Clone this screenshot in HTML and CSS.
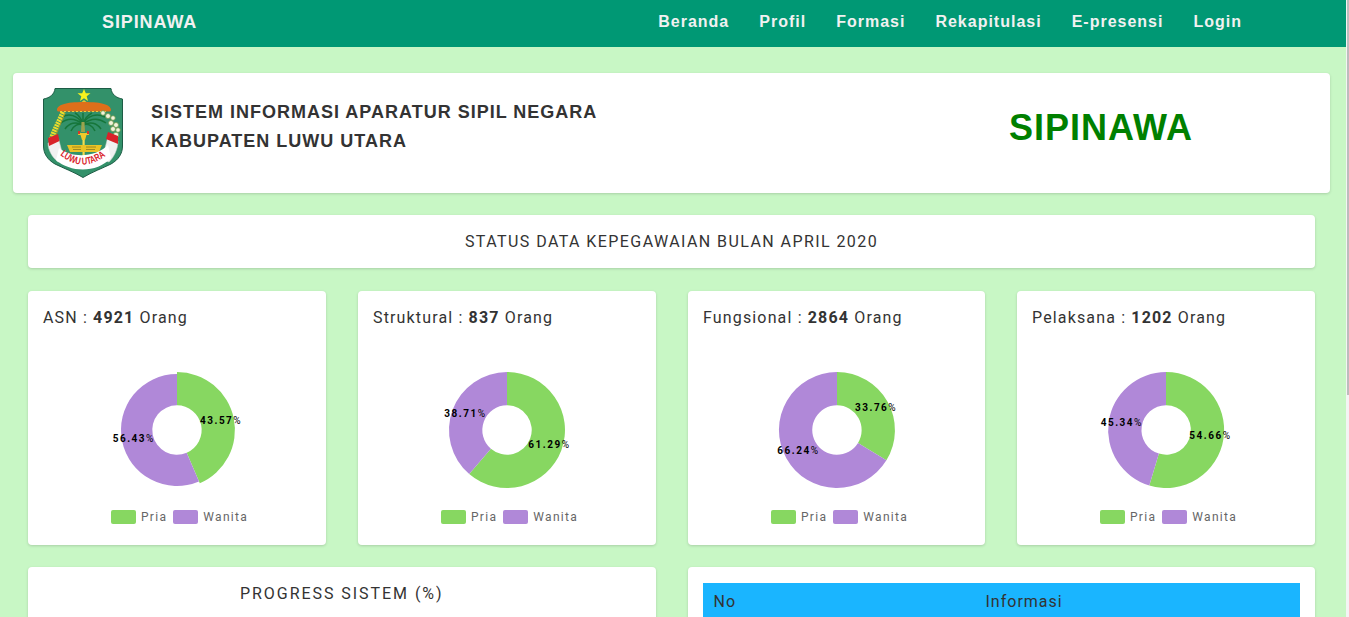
FILE: index.html
```html
<!DOCTYPE html>
<html lang="id">
<head>
<meta charset="utf-8">
<title>SIPINAWA</title>
<link rel="stylesheet" href="styles.css">
</head>
<body>
<div class="scrollbar"><div class="thumb"></div></div>
<nav class="navbar">
  <a class="brand">SIPINAWA</a>
  <ul class="menu">
    <li>Beranda</li><li>Profil</li><li>Formasi</li><li>Rekapitulasi</li><li>E-presensi</li><li>Login</li>
  </ul>
</nav>
<main class="page">
  <header class="card head">
    <svg class="logo" viewBox="0 0 80 90" width="80" height="90">
      <path d="M12 .5H68C68.500 6 73 10 79.500 11V58C79.500 66 75 72 68 76C60 80 49 84 40 89.500C31 84 20 80 12 76C5 72 .5 66 .5 58V11C7 10 11.500 6 12 .5Z" fill="#33916a" stroke="#1d5c45"/>
      <polygon points="41,1 42.800,5.200 47.500,5.200 43.700,8.200 45,13 41,10.200 37,13 38.300,8.200 34.500,5.200 39.200,5.200" fill="#f6f21e"/>
      <path d="M36 16L41 12L46 16Z" fill="#d8c935"/>
      <path d="M14 22C14 17 22 14 41 14C60 14 68 17 68 22C68 24 66 23.500 62 23.500H20C16 23.500 14 24 14 22Z" fill="#dd6f1a"/>
      <path d="M17 23.500H65" stroke="#f0c93a" stroke-dasharray="2 2"/>
      <g fill="none" stroke="#16763a" stroke-width="1.500">
        <path d="M40 36C34 27 26 25 19 29"/><path d="M40 36C32 30 24 30 18 35"/><path d="M40 37C33 33 26 35 22 41"/><path d="M40 37C35 35 30 38 28 43"/>
        <path d="M40 36C45 27 54 25 62 29"/><path d="M40 36C48 30 56 30 63 35"/><path d="M40 37C47 33 54 35 58 41"/><path d="M40 37C45 35 50 38 52 43"/>
        <path d="M40 36C38 30 36 27 32 25"/><path d="M40 36C42 30 45 27 49 25"/><path d="M40 36V25"/>
      </g>
      <path d="M38.500 34H41.500L42 44H38Z" fill="#9aa34e"/>
      <path d="M20 24C16 34 11 42 8 52" fill="none" stroke="#ecdc2c" stroke-width="5" stroke-dasharray="2 .8"/>
      <path d="M22 25C18 35 14 43 12 51" fill="none" stroke="#a89a22" stroke-width="1"/>
      <g fill="#f3f3dc" stroke="#6f9a4c" stroke-width=".8">
        <circle cx="60" cy="25" r="2.300"/><circle cx="65" cy="28" r="2.500"/><circle cx="70" cy="30" r="2.300"/><circle cx="68" cy="35" r="2.500"/><circle cx="73" cy="37" r="2.500"/><circle cx="70" cy="41" r="2.500"/><circle cx="75" cy="42" r="2.300"/><circle cx="73" cy="47" r="2.800"/><circle cx="68" cy="48" r="2.300"/>
      </g>
      <path d="M36 43L35 47H37.500L39 52H42L43.500 47H46L45 43L43.500 45H37.500Z" fill="#f0c92a"/>
      <path d="M35 43H37V46H35ZM44 43H46V46H44Z" fill="#d6382a"/>
      <rect x="39.500" y="52" width="2.200" height="18" fill="#f0dc50"/>
      <path d="M24 57H59L56 64H27Z" fill="#eac326"/>
      <path d="M29 59H38M43 59H53M30 61.500H38M43 61.500H52" stroke="#8c7a22" stroke-width=".8"/>
      <path d="M5 55L15.500 50.500L18 60L21 72L15 74C9 69 5 62 5 55Z" fill="#f1f1f1" stroke="#c9d4cc" stroke-width=".5"/>
      <path d="M75 53L65 48.500L62 60L60 72L66 74C71 69 75 61 75 53Z" fill="#f1f1f1" stroke="#c9d4cc" stroke-width=".5"/>
      <path d="M5 50L15 46L16.500 53L6 58ZM75 48L65 44L63 51L75 56Z" fill="#d9232a"/>
      <path d="M16 60C28 70 52 70 65 57L68 70C54 85 28 85 13 72Z" fill="#fff"/>
      <text class="motto"><textPath href="#motto-arc" textLength="50" lengthAdjust="spacingAndGlyphs">LUWU UTARA</textPath></text>
      <path id="motto-arc" d="M17 67Q41 87 66 65" fill="none"/>
    </svg>
    <div class="org">
      <div>SISTEM INFORMASI APARATUR SIPIL NEGARA</div>
      <div>KABUPATEN LUWU UTARA</div>
    </div>
    <div class="title">SIPINAWA</div>
  </header>
  <section class="inner">
    <div class="card status">STATUS DATA KEPEGAWAIAN BULAN APRIL 2020</div>
    <div class="charts">
      <article class="card stat">
        <h3>ASN : <b>4921</b> Orang</h3>
        <svg class="donut" viewBox="0 0 298 150" width="298" height="150">
          <path class="g" d="M149 12A58 58 0 0 1 171.800 123.300L158.700 92.700A24.700 24.700 0 0 0 149 45.300Z"/>
          <path class="p" d="M149 14A56 56 0 1 0 171 121.500L158.700 92.700A24.700 24.700 0 1 1 149 45.300Z"/>
          <text x="172" y="64">43.57<tspan class="pc">%</tspan></text><text x="84.700" y="81.700">56.43<tspan class="pc">%</tspan></text>
        </svg>
        <div class="legend"><i class="g"></i><span>Pria</span><i class="p"></i><span>Wanita</span></div>
      </article>
      <article class="card stat">
        <h3>Struktural : <b>837</b> Orang</h3>
        <svg class="donut" viewBox="0 0 298 150" width="298" height="150">
          <path class="g" d="M149 12A58 58 0 1 1 111.200 114L132.900 88.700A24.700 24.700 0 1 0 149 45.300Z"/>
          <path class="p" d="M149 12A58 58 0 0 0 111.200 114L132.900 88.700A24.700 24.700 0 0 1 149 45.300Z"/>
          <text x="170.300" y="88">61.29<tspan class="pc">%</tspan></text><text x="86.300" y="56.700">38.71<tspan class="pc">%</tspan></text>
        </svg>
        <div class="legend"><i class="g"></i><span>Pria</span><i class="p"></i><span>Wanita</span></div>
      </article>
      <article class="card stat">
        <h3>Fungsional : <b>2864</b> Orang</h3>
        <svg class="donut" viewBox="0 0 298 150" width="298" height="150">
          <path class="g" d="M149 12A58 58 0 0 1 198.400 100.300L170 82.900A24.700 24.700 0 0 0 149 45.300Z"/>
          <path class="p" d="M149 12A58 58 0 1 0 198.400 100.300L170 82.900A24.700 24.700 0 1 1 149 45.300Z"/>
          <text x="167" y="51">33.76<tspan class="pc">%</tspan></text><text x="89.300" y="94">66.24<tspan class="pc">%</tspan></text>
        </svg>
        <div class="legend"><i class="g"></i><span>Pria</span><i class="p"></i><span>Wanita</span></div>
      </article>
      <article class="card stat">
        <h3>Pelaksana : <b>1202</b> Orang</h3>
        <svg class="donut" viewBox="0 0 298 150" width="298" height="150">
          <path class="g" d="M149 12A58 58 0 1 1 132.300 125.500L141.900 93.600A24.700 24.700 0 1 0 149 45.300Z"/>
          <path class="p" d="M149 12A58 58 0 0 0 132.300 125.500L141.900 93.600A24.700 24.700 0 0 1 149 45.300Z"/>
          <text x="172.300" y="79">54.66<tspan class="pc">%</tspan></text><text x="83.700" y="66">45.34<tspan class="pc">%</tspan></text>
        </svg>
        <div class="legend"><i class="g"></i><span>Pria</span><i class="p"></i><span>Wanita</span></div>
      </article>
    </div>
    <div class="bottom">
      <div class="card progress">PROGRESS SISTEM (%)<div class="spacer"></div></div>
      <div class="card info">
        <div class="thead"><span class="no">No</span><span>Informasi</span></div>
        <div class="spacer"></div>
      </div>
    </div>
  </section>
</main>
</body>
</html>
```
FILE: styles.css
```css
* { box-sizing: border-box; }
html { scrollbar-width: none; }
::-webkit-scrollbar { display: none; }
body { margin: 0; padding-right: 3px; background: #c8f7c5; font-family: Roboto, sans-serif; color: #333; letter-spacing: 1px; font-size: 16px; }
.scrollbar { position: fixed; top: 0; right: 0; bottom: 0; width: 3px; background: #f4f4f4; display: flex; justify-content: flex-end; }
.thumb { width: 2px; height: 395px; background: #bdbdbd; }
.navbar { height: 47px; background: #009874; color: #f1f1f1; display: flex; justify-content: space-between; padding: 11px 104px 0 102px; font-family: "Liberation Sans", sans-serif; font-weight: 700; font-size: 16px; }
.brand { font-size: 18px; line-height: 22px; letter-spacing: .9px; }
.menu { display: flex; gap: 30px; list-style: none; margin: 0; padding: 0; line-height: 22px; }
.page { padding: 26px 16px 40px 13px; }
.card { background: #fff; border-radius: 4px; box-shadow: 0 1px 3px rgba(0,0,0,.16); }
.head { height: 120px; display: flex; align-items: center; padding: 0 30px; }
.logo { flex: none; }
.org { margin-left: 28px; font-family: "Liberation Sans", sans-serif; font-weight: 700; font-size: 18px; line-height: 29px; color: #333; margin-top: -12px; }
.title { margin-left: auto; margin-right: 107px; font-family: "Liberation Sans", sans-serif; font-weight: 700; font-size: 36px; color: #008000; letter-spacing: 1px; margin-top: -10px; }
.motto { font: 700 10px "Liberation Sans", sans-serif; letter-spacing: 0; fill: #d9232a; }
.inner { padding: 22px 15px 0; display: flex; flex-direction: column; }
.status { height: 53px; display: flex; align-items: center; justify-content: center; letter-spacing: 1.42px; margin-bottom: 23px; }
.charts { display: grid; grid-template-columns: 298px 298px 297px 298px; gap: 32px; margin-bottom: 22px; }
.stat { height: 254px; padding: 16px 15px 0; }
.stat h3 { margin: 0; font-weight: 400; font-size: 16px; line-height: 22px; letter-spacing: 1.15px; }
.stat b { font-weight: 700; }
.donut { display: block; margin: 31px -15px 0; }
.donut text { font: 700 10px Roboto, sans-serif; letter-spacing: 1.5px; fill: #000; }
.donut .pc { font-weight: 400; }
.donut .g { fill: #87d761; }
.donut .p { fill: #b088d8; }
.legend { display: flex; align-items: center; margin: 0 0 0 68px; font-size: 12px; color: #666; line-height: 14px; letter-spacing: 1.3px; }
.legend i { width: 25px; height: 14px; border-radius: 2px; margin-right: 5px; }
.legend span { margin-right: 6px; }
.legend i.g { background: #87d761; }
.legend i.p { background: #b088d8; }
.bottom { display: grid; grid-template-columns: 1fr 1fr; gap: 32px; }
.progress { padding: 16px 15px; text-align: center; letter-spacing: 1.95px; line-height: 22px; }
.info { padding: 16px 15px; }
.thead { background: #1ab5ff; height: 60px; display: flex; padding: 9px 10px 9px 11px; line-height: 20px; font-size: 16px; }
.no { width: 272px; }
.spacer { height: 320px; }
```
